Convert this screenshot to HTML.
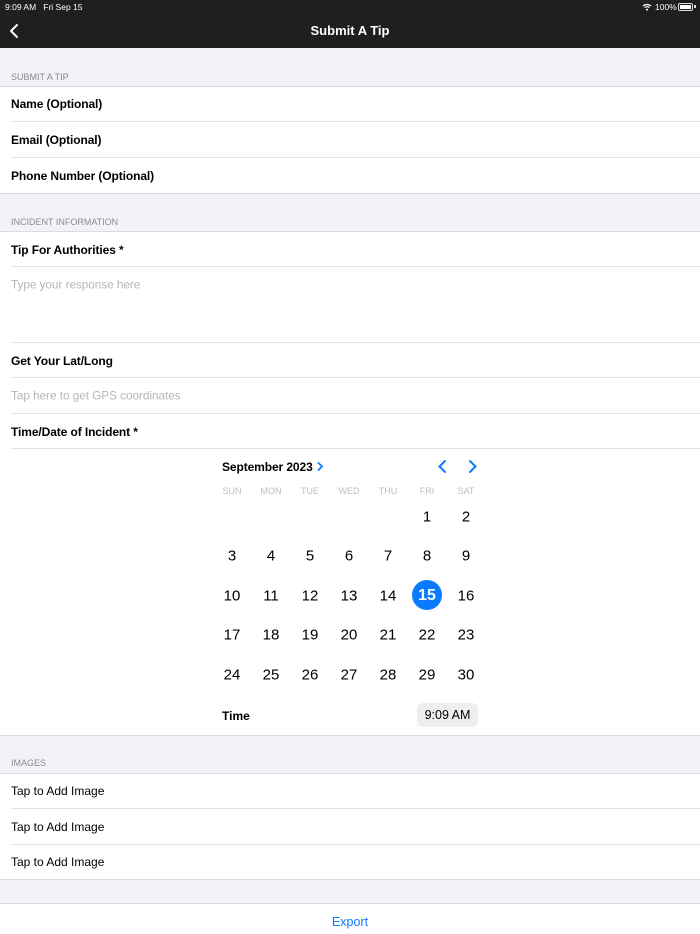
<!DOCTYPE html>
<html><head><meta charset="utf-8"><style>
*{margin:0;padding:0;box-sizing:border-box}
body{width:700px;height:934px;background:#f2f2f7;font-family:"Liberation Sans",sans-serif;position:relative;overflow:hidden;color:#000}
.a{position:absolute}
.w{position:absolute;left:0;width:700px;background:#fff}
.sep{position:absolute;left:11px;right:0;height:1px;background:#e3e3e6}
.full{position:absolute;left:0;right:0;height:1px;background:#dcdce0}
.lbl{position:absolute;left:11px;font-size:12px;font-weight:bold;letter-spacing:-0.1px;transform:translateY(-50%)}
.ph{position:absolute;left:11px;font-size:11.7px;color:#b5b5ba;transform:translateY(-50%)}
.hd{position:absolute;left:11px;font-size:9px;color:#8a8a8e;transform:translateY(-50%)}
.reg{position:absolute;left:11px;font-size:12px;transform:translateY(-50%)}
.d{position:absolute;width:34px;margin-left:-17px;text-align:center;font-size:15px;transform:translateY(-50%)}
.wd{position:absolute;width:34px;margin-left:-17px;text-align:center;font-size:9px;color:#bdbdc2;transform:translateY(-50%)}
</style></head><body>
<div class="a" style="left:0;top:0;width:700px;height:48px;background:#1f1f21"></div>
<div class="a" style="left:5px;top:2px;font-size:8.5px;color:#fff">9:09 AM&nbsp;&nbsp;&nbsp;Fri Sep 15</div>
<svg class="a" style="left:642px;top:3px" width="10" height="8" viewBox="0 0 10 8"><path d="M1 3a6 6 0 0 1 8 0M2.6 4.6a3.6 3.6 0 0 1 4.8 0" stroke="#fff" stroke-width="1.2" fill="none"/><circle cx="5" cy="6.6" r="1" fill="#fff"/></svg>
<div class="a" style="left:655px;top:2px;font-size:8.5px;color:#fff">100%</div>
<div class="a" style="left:678px;top:3px;width:15px;height:8px;border:1px solid #ddd;border-radius:2px;padding:1px"><div style="width:100%;height:100%;background:#fff"></div></div>
<div class="a" style="left:694px;top:5px;width:1.5px;height:3px;background:#ddd"></div>
<svg class="a" style="left:8px;top:23px" width="12" height="16" viewBox="0 0 12 16"><path d="M9 2L3 8l6 6" stroke="#fff" stroke-width="2" fill="none" stroke-linecap="round" stroke-linejoin="round"/></svg>
<div class="a" style="left:0;width:700px;top:23px;text-align:center;color:#fff;font-size:13px;font-weight:bold">Submit A Tip</div>

<div class="hd" style="top:77px">SUBMIT A TIP</div>
<div class="w" style="top:86px;height:107px"></div>
<div class="full" style="top:86px"></div>
<div class="lbl" style="top:104px">Name (Optional)</div>
<div class="sep" style="top:121px"></div>
<div class="lbl" style="top:140px">Email (Optional)</div>
<div class="sep" style="top:157px"></div>
<div class="lbl" style="top:176px">Phone Number (Optional)</div>
<div class="full" style="top:193px"></div>

<div class="hd" style="top:222px">INCIDENT INFORMATION</div>
<div class="w" style="top:231px;height:504px"></div>
<div class="full" style="top:231px"></div>
<div class="lbl" style="top:250px">Tip For Authorities *</div>
<div class="sep" style="top:266px"></div>
<div class="ph" style="top:285px">Type your response here</div>
<div class="sep" style="top:342px"></div>
<div class="lbl" style="top:361px">Get Your Lat/Long</div>
<div class="sep" style="top:377px"></div>
<div class="ph" style="top:396px">Tap here to get GPS coordinates</div>
<div class="sep" style="top:413px"></div>
<div class="lbl" style="top:432px">Time/Date of Incident *</div>
<div class="sep" style="top:448px"></div>

<div class="a" style="left:222px;top:467px;transform:translateY(-50%);font-size:12px;font-weight:bold;letter-spacing:-0.1px">September 2023</div>
<svg class="a" style="left:316px;top:461px" width="8" height="11" viewBox="0 0 8 11"><path d="M2 1.5l4 4-4 4" stroke="#0a7aff" stroke-width="1.8" fill="none"/></svg>
<svg class="a" style="left:436px;top:459px" width="12" height="15" viewBox="0 0 12 15"><path d="M9 2L3.5 7.5 9 13" stroke="#0a7aff" stroke-width="2" fill="none" stroke-linecap="round"/></svg>
<svg class="a" style="left:467px;top:459px" width="12" height="15" viewBox="0 0 12 15"><path d="M3 2l5.5 5.5L3 13" stroke="#0a7aff" stroke-width="2" fill="none" stroke-linecap="round"/></svg>
<div class="wd" style="left:232px;top:491px">SUN</div><div class="wd" style="left:271px;top:491px">MON</div><div class="wd" style="left:310px;top:491px">TUE</div><div class="wd" style="left:349px;top:491px">WED</div><div class="wd" style="left:388px;top:491px">THU</div><div class="wd" style="left:427px;top:491px">FRI</div><div class="wd" style="left:466px;top:491px">SAT</div>
<div class="a" style="left:412px;top:580px;width:30px;height:30px;border-radius:50%;background:#0a7aff"></div>
<div class="d" style="left:427px;top:517px">1</div><div class="d" style="left:466px;top:517px">2</div>
<div class="d" style="left:232px;top:556px">3</div><div class="d" style="left:271px;top:556px">4</div><div class="d" style="left:310px;top:556px">5</div><div class="d" style="left:349px;top:556px">6</div><div class="d" style="left:388px;top:556px">7</div><div class="d" style="left:427px;top:556px">8</div><div class="d" style="left:466px;top:556px">9</div>
<div class="d" style="left:232px;top:596px">10</div><div class="d" style="left:271px;top:596px">11</div><div class="d" style="left:310px;top:596px">12</div><div class="d" style="left:349px;top:596px">13</div><div class="d" style="left:388px;top:596px">14</div><div class="d" style="left:427px;top:596px;color:#fff;font-weight:bold;font-size:16px">15</div><div class="d" style="left:466px;top:596px">16</div>
<div class="d" style="left:232px;top:635px">17</div><div class="d" style="left:271px;top:635px">18</div><div class="d" style="left:310px;top:635px">19</div><div class="d" style="left:349px;top:635px">20</div><div class="d" style="left:388px;top:635px">21</div><div class="d" style="left:427px;top:635px">22</div><div class="d" style="left:466px;top:635px">23</div>
<div class="d" style="left:232px;top:675px">24</div><div class="d" style="left:271px;top:675px">25</div><div class="d" style="left:310px;top:675px">26</div><div class="d" style="left:349px;top:675px">27</div><div class="d" style="left:388px;top:675px">28</div><div class="d" style="left:427px;top:675px">29</div><div class="d" style="left:466px;top:675px">30</div>
<div class="a" style="left:222px;top:716px;transform:translateY(-50%);font-size:12px;font-weight:bold">Time</div>
<div class="a" style="left:417px;top:703px;width:61px;height:24px;background:#eeeef0;border-radius:6px;font-size:12.5px;text-align:center;line-height:25px">9:09 AM</div>
<div class="full" style="top:735px"></div>

<div class="hd" style="top:763px">IMAGES</div>
<div class="w" style="top:773px;height:106px"></div>
<div class="full" style="top:773px"></div>
<div class="reg" style="top:791px">Tap to Add Image</div>
<div class="sep" style="top:808px"></div>
<div class="reg" style="top:827px">Tap to Add Image</div>
<div class="sep" style="top:844px"></div>
<div class="reg" style="top:862px">Tap to Add Image</div>
<div class="full" style="top:879px"></div>

<div class="w" style="top:903px;height:31px"></div>
<div class="full" style="top:903px"></div>
<div class="a" style="left:0;width:700px;top:915px;text-align:center;color:#0a7aff;font-size:12.5px">Export</div>
</body></html>
